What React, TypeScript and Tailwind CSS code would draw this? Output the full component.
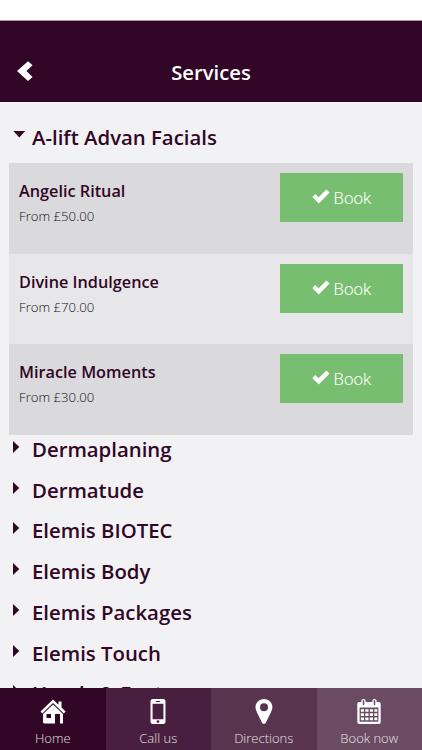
const services = [
    { name: 'Angelic Ritual', price: 'From £50.00' },
    { name: 'Divine Indulgence', price: 'From £70.00' },
    { name: 'Miracle Moments', price: 'From £30.00' },
]

const categories = ['Dermaplaning', 'Dermatude', 'Elemis BIOTEC', 'Elemis Body', 'Elemis Packages', 'Elemis Touch', 'Hands & Feet']

export default function App() {
    return (
        <div className="flex flex-col w-full h-screen overflow-hidden bg-[#f2f2f4] font-['Open_Sans',sans-serif] text-[#310626]">
            <Header></Header>
            <Services></Services>
            <TabBar></TabBar>
        </div>
    )
}

const Header = function () {
    return (
        <div className="shrink-0">
            <div className="h-[20px] bg-white"></div>
            <div className="grid grid-cols-[1fr_auto_1fr] items-center h-[82px] pt-[21px] border-t border-[#a797a5] bg-[#310626] text-white">
                <svg className="w-[16px] h-[20px] ml-[17px] mb-[2px]" viewBox="0 0 16 20" fill="currentColor">
                    <path d="M0 10 L11 0.2 L15.6 4.3 L9.4 10 L15.6 16 L11 20 Z" />
                </svg>
                <div className="text-[20.3px] leading-[27px] font-semibold">Services</div>
            </div>
        </div>
    )
}

const Services = function () {
    return (
        <div className="grow min-h-0 overflow-hidden">
            <div className="flex h-[61.3px] pt-[20px] pl-[13px]">
                <svg className="w-[13px] h-[7px] mt-[9px] mr-[6px]" viewBox="0 0 13 7" fill="currentColor">
                    <path d="M0.4 0 H12.2 L6.3 6.6 Z" />
                </svg>
                <div className="text-[20.35px] leading-[31px] font-semibold">A-lift Advan Facials</div>
            </div>
            <div className="mx-[9px]">
                {services.map((service) => (
                    <div key={service.name} className="flex justify-between items-start h-[90.5px] pl-[10px] pr-[10px] pt-[10px] bg-[#dadadc] even:bg-[#e7e7e9]">
                        <div className="pt-[6px]">
                            <div className="text-[16.25px] leading-[24px] font-semibold">{service.name}</div>
                            <div className="text-[13.2px] leading-[18px] mt-[4px] font-light text-[#111]">{service.price}</div>
                        </div>
                        <div className="flex items-center justify-center gap-[4px] w-[123px] h-[49px] bg-[#78be70] text-white">
                            <svg className="w-[18px] h-[15px] mb-[2px]" viewBox="0 0 18 15" fill="currentColor">
                                <path d="M0.3 8 L3.3 5 L6.6 8.2 L14.4 0.4 L17.6 3.4 L6.8 14.5 Z" />
                            </svg>
                            <div className="font-['Roboto',sans-serif] font-light text-[17px] pt-[2px]">Book</div>
                        </div>
                    </div>
                ))}
            </div>
            <div className="pl-[13px]">
                {categories.map((category) => (
                    <div key={category} className="flex h-[40.75px]">
                        <svg className="w-[7px] h-[12px] mt-[6px] mr-[12px]" viewBox="0 0 7 12" fill="currentColor">
                            <path d="M0 0 L6.3 6 L0 12 Z" />
                        </svg>
                        <div className="text-[20.35px] leading-[28.6px] font-semibold">{category}</div>
                    </div>
                ))}
            </div>
        </div>
    )
}

const TabBar = function () {
    return (
        <div className="grid grid-cols-4 shrink-0 h-[62px] text-white">
            <div className="flex flex-col items-center pt-[11px] bg-[#310626]">
                <svg className="w-[26px] h-[25px]" viewBox="0 0 26 25">
                    <path fill="currentColor" d="M0.5 12.5 L13 0.5 L18.5 5.7 V2.5 H21.5 V8.5 L25.6 12.5 L23.8 14.4 L13 4 L2.3 14.4 Z" />
                    <path fill="currentColor" fillRule="evenodd" d="M3 15 L13 5.4 L23 15 V24.5 H20 V15 H15 V24.5 H4.5 Q3 24.5 3 23 Z M6.5 15 V19 H11 V15 Z" />
                </svg>
                <div className="text-[13px] leading-[18px] mt-[5px] font-light text-white/85">Home</div>
            </div>
            <div className="flex flex-col items-center pt-[11px] bg-[#481f3f]">
                <svg className="w-[16px] h-[25px]" viewBox="0 0 16 25">
                    <path fill="currentColor" fillRule="evenodd" d="M3 0 H13 Q15.5 0 15.5 2.5 V22.5 Q15.5 25 13 25 H3 Q0.5 25 0.5 22.5 V2.5 Q0.5 0 3 0 Z M2.6 4.8 V20.2 H13.4 V4.8 Z M5.8 2 V2.9 H10.2 V2 Z M8 21.2 A1.4 1.4 0 1 0 8 24 A1.4 1.4 0 1 0 8 21.2 Z" />
                </svg>
                <div className="text-[13px] leading-[18px] mt-[5px] font-light text-white/85">Call us</div>
            </div>
            <div className="flex flex-col items-center pt-[11px] bg-[#59344f]">
                <svg className="w-[18px] h-[25px]" viewBox="0 0 18 25">
                    <path fill="currentColor" fillRule="evenodd" d="M9 0 C4 0 0.5 3.7 0.5 8.3 C0.5 11.5 3.6 16.5 6.8 23.2 Q7.5 25 9 25 Q10.3 25 11.1 23.2 C14.3 16.5 17.4 11.5 17.4 8.3 C17.4 3.7 14 0 9 0 Z M9 4.3 A4 4 0 1 1 9 12.3 A4 4 0 1 1 9 4.3 Z" />
                </svg>
                <div className="text-[13px] leading-[18px] mt-[5px] font-light text-white/85">Directions</div>
            </div>
            <div className="flex flex-col items-center pt-[11px] bg-[#6b4b62]">
                <svg className="w-[24px] h-[25px]" viewBox="0 0 24 25">
                    <path fill="currentColor" fillRule="evenodd" d="M2 3 H22 Q23.7 3 23.7 4.8 V23 Q23.7 25 21.7 25 H2.3 Q0.3 25 0.3 23 V4.8 Q0.3 3 2 3 Z M2.6 8.5 V22.7 H21.4 V8.5 Z" />
                    <path className="stroke-white" strokeWidth="4.4" strokeLinecap="round" d="M6.5 2.2 V5 M17.5 2.2 V5" />
                    <path className="stroke-[#6b4b62]" strokeWidth="1.5" strokeLinecap="round" d="M6.5 1.7 V5.4 M17.5 1.7 V5.4" />
                    <path className="stroke-white" strokeWidth="2.7" strokeDasharray="3.2 1.3" d="M3.8 11.5 H20.3 M3.8 15.7 H20.3 M3.8 19.9 H20.3" />
                </svg>
                <div className="text-[13px] leading-[18px] mt-[5px] font-light text-white/85">Book now</div>
            </div>
        </div>
    )
}
